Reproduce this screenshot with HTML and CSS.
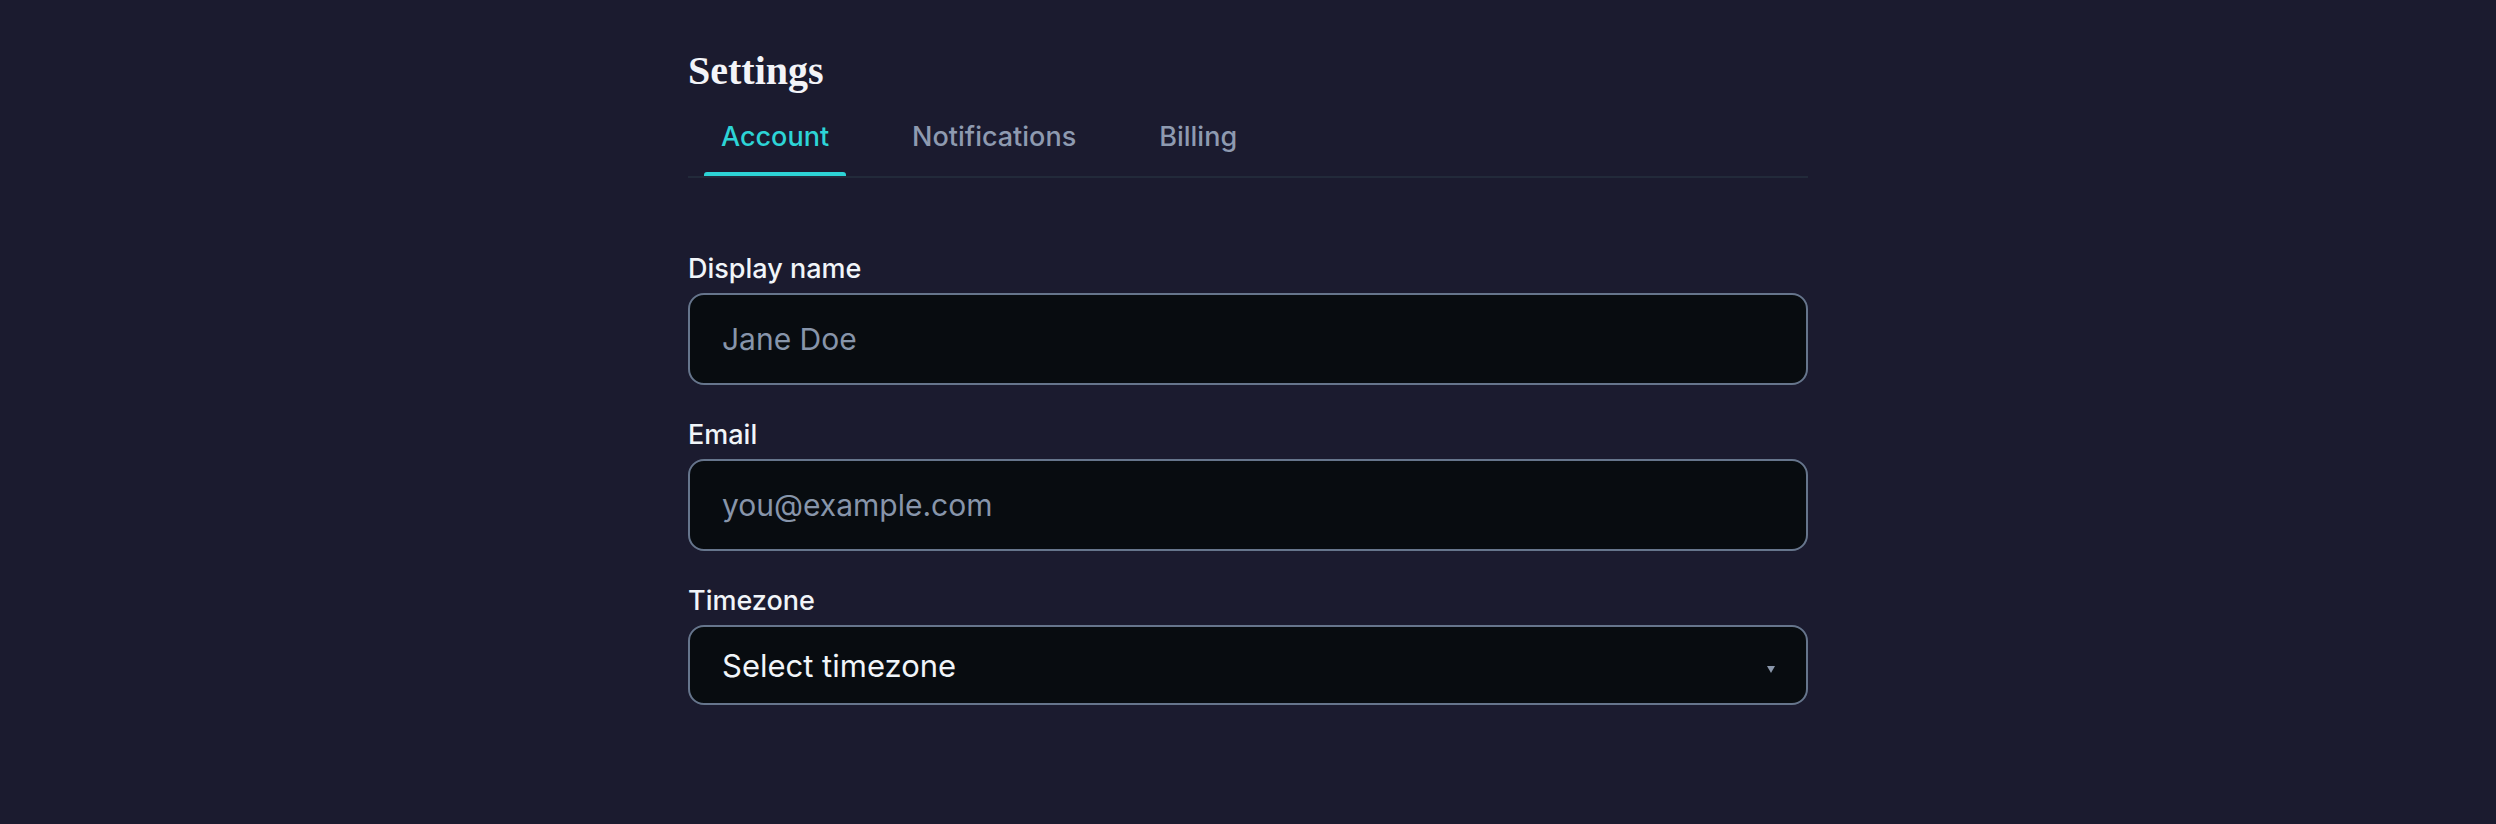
FILE: index.html
```html
<!DOCTYPE html>
<html lang="en">
<head>
<meta charset="utf-8">
<title>Settings</title>
<link rel="stylesheet" href="styles.css">
</head>
<body>
<main class="page">
  <h1 class="title">Settings</h1>
  <nav class="tabs">
    <a class="tab active" href="#">Account</a>
    <a class="tab" href="#">Notifications</a>
    <a class="tab" href="#">Billing</a>
  </nav>
  <form class="form">
    <div class="field">
      <label class="label" for="name">Display name</label>
      <input class="input" id="name" type="text" placeholder="Jane Doe">
    </div>
    <div class="field">
      <label class="label" for="email">Email</label>
      <input class="input" id="email" type="email" placeholder="you@example.com">
    </div>
    <div class="field">
      <label class="label" for="tz">Timezone</label>
      <div class="select-wrap">
        <select class="select" id="tz">
          <option>Select timezone</option>
          <option>UTC</option>
        </select>
        <span class="arrow"></span>
      </div>
    </div>
  </form>
</main>
</body>
</html>
```
FILE: styles.css
```css
* { box-sizing: border-box; }
html, body {
  margin: 0;
  background: #1b1b2f;
}
body {
  font-family: Inter, "Noto Sans", sans-serif;
  color: #f1f5f9;
}
.page {
  max-width: 1120px;
  margin: 0 auto;
  padding-top: 47px;
}
.title {
  margin: 0 0 12px;
  font-family: "Liberation Serif", "Times New Roman", serif;
  font-size: 40px;
  font-weight: 700;
  line-height: 48px;
  color: #f3f4f8;
}
.tabs {
  display: flex;
  gap: 49px;
  padding-left: 16px;
  border-bottom: 2px solid #222a3a;
}
.tab {
  position: relative;
  padding: 13px 17px 22px;
  font-size: 27px;
  font-weight: 500;
  line-height: 34px;
  color: #8e9ab0;
  text-decoration: none;
}
.tab.active { color: #2dd4d6; }
.tab.active::after {
  content: "";
  position: absolute;
  left: 0;
  right: 0;
  bottom: 0;
  height: 4px;
  border-radius: 3px 3px 0 0;
  background: #2dd4d6;
}
.form {
  display: flex;
  flex-direction: column;
  gap: 34px;
  margin-top: 75px;
}
.field {
  display: flex;
  flex-direction: column;
  gap: 8px;
}
.label {
  font-size: 27px;
  font-weight: 500;
  line-height: 32px;
  color: #f1f5f9;
}
.input, .select {
  width: 100%;
  height: 92px;
  padding: 0 32px;
  border: 2px solid #66758c;
  border-radius: 16px;
  background: #080c10;
  font-family: Inter, "Noto Sans", sans-serif;
  font-size: 30px;
  color: #f1f5f9;
  outline: none;
}
.input::placeholder { color: #8795aa; opacity: 1; }
.select-wrap { position: relative; }
.select {
  height: 80px;
  font-size: 31px;
  appearance: none;
  -webkit-appearance: none;
}
.arrow {
  position: absolute;
  right: 33px;
  top: 41px;
  width: 0;
  height: 0;
  border-left: 4px solid transparent;
  border-right: 4px solid transparent;
  border-top: 7px solid #8a97ab;
  pointer-events: none;
}
```
